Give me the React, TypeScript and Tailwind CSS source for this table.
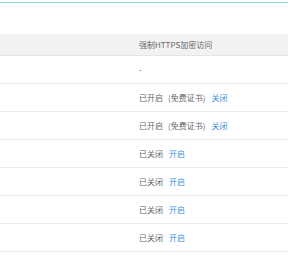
import React from "react"

type Row = { status: string; note?: string; action?: string }

const rows: Row[] = [
  { status: "-" },
  { status: "已开启", note: "(免费证书)", action: "关闭" },
  { status: "已开启", note: "(免费证书)", action: "关闭" },
  { status: "已关闭", action: "开启" },
  { status: "已关闭", action: "开启" },
  { status: "已关闭", action: "开启" },
  { status: "已关闭", action: "开启" },
]

export default function App() {
  return (
    <div
      className="w-[288px] h-[260px] overflow-hidden bg-white text-[8px] text-[#666]"
      style={{ fontFamily: '"Noto Sans CJK SC", "Noto Sans", sans-serif' }}
    >
      <div className="h-[2px]" />
      <div className="h-px bg-[#8ddcdc]" />
      <div className="h-[31px]" />

      {/* header */}
      <div className="h-[22px] bg-[#f2f2f2] border-b border-[#e4e4e4] flex items-center pl-[139px]">
        <span>强制HTTPS加密访问</span>
      </div>

      {rows.map((r, i) => (
        <div key={i} className="h-[28px] border-b border-[#ececec] flex items-center pl-[139px] pt-px">
          <span>{r.status}</span>
          {r.note && <span className="ml-[5px]">{r.note}</span>}
          {r.action && <span className="ml-[6px] text-[#3d8fe0] cursor-pointer">{r.action}</span>}
        </div>
      ))}
    </div>
  )
}
